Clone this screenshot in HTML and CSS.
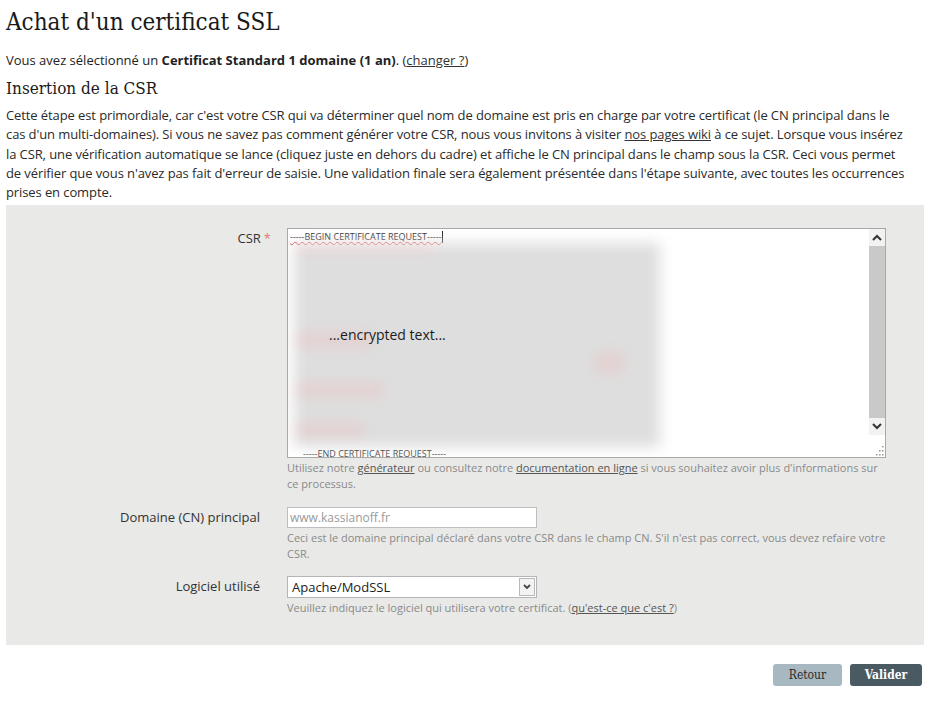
FILE: index.html
```html
<!DOCTYPE html>
<html lang="fr">
<head>
    <meta charset="UTF-8">
    <meta name="viewport" content="width=device-width, initial-scale=1.0">
    <title>Achat d'un certificat SSL</title>
    <link rel="stylesheet" href="styles.css">
</head>
<body>
    <main class="page">
        <h1 class="title">Achat d'un certificat SSL</h1>
        <p class="selection">
            Vous avez sélectionné un <strong>Certificat Standard 1 domaine (1 an)</strong>. (<a href="#">changer ?</a>)
        </p>
        <h2 class="subtitle">Insertion de la CSR</h2>
        <p class="intro">
            Cette étape est primordiale, car c'est votre CSR qui va déterminer quel nom de domaine est pris en charge par votre certificat (le CN principal dans le<br>
            cas d'un multi-domaines). Si vous ne savez pas comment générer votre CSR, nous vous invitons à visiter <a href="#">nos pages wiki</a> à ce sujet. Lorsque vous insérez<br>
            la CSR, une vérification automatique se lance (cliquez juste en dehors du cadre) et affiche le CN principal dans le champ sous la CSR. Ceci vous permet<br>
            de vérifier que vous n'avez pas fait d'erreur de saisie. Une validation finale sera également présentée dans l'étape suivante, avec toutes les occurrences<br>
            prises en compte.
        </p>

        <form class="panel">
            <div class="row">
                <label class="label">CSR<span class="req">*</span></label>
                <div class="field">
                    <div class="csr-box">
                        <div class="csr-text">
                            <div class="csr-line"><span class="spell">-----BEGIN CERTIFICATE REQUEST-----</span><span class="caret"></span></div>
                            <div class="csr-blur">
                                <div class="smudge smudge-a"></div>
                                <div class="smudge smudge-b"></div>
                                <div class="smudge smudge-c"></div>
                                <div class="smudge smudge-d"></div>
                                <div class="smudge smudge-e"></div>
                            </div>
                            <div class="csr-note">...encrypted text...</div>
                            <div class="csr-end">-----END CERTIFICATE REQUEST-----</div>
                        </div>
                        <div class="scrollbar">
                            <div class="sb-btn">
                                <svg width="10" height="7" viewBox="0 0 10 7"><path d="M1 6 L5 2 L9 6" fill="none" stroke="#333" stroke-width="2"/></svg>
                            </div>
                            <div class="sb-thumb"></div>
                            <div class="sb-btn">
                                <svg width="10" height="7" viewBox="0 0 10 7"><path d="M1 1 L5 5 L9 1" fill="none" stroke="#333" stroke-width="2"/></svg>
                            </div>
                            <div class="sb-grip">
                                <svg width="10" height="10" viewBox="0 0 10 10" fill="#999">
                                    <rect x="8" y="0" width="1.5" height="1.5"/>
                                    <rect x="5" y="4" width="1.5" height="1.5"/><rect x="8" y="4" width="1.5" height="1.5"/>
                                    <rect x="2" y="8" width="1.5" height="1.5"/><rect x="5" y="8" width="1.5" height="1.5"/><rect x="8" y="8" width="1.5" height="1.5"/>
                                </svg>
                            </div>
                        </div>
                    </div>
                    <p class="hint">Utilisez notre <a href="#">générateur</a> ou consultez notre <a href="#">documentation en ligne</a> si vous souhaitez avoir plus d'informations sur ce processus.</p>
                </div>
            </div>

            <div class="row">
                <label class="label" for="cn">Domaine (CN) principal</label>
                <div class="field">
                    <input type="text" id="cn" class="text-input" value="www.kassianoff.fr" readonly>
                    <p class="hint hint-tight">Ceci est le domaine principal déclaré dans votre CSR dans le champ CN. S'il n'est pas correct, vous devez refaire votre CSR.</p>
                </div>
            </div>

            <div class="row">
                <label class="label" for="soft">Logiciel utilisé</label>
                <div class="field">
                    <div class="select" id="soft">
                        <span class="select-value">Apache/ModSSL</span>
                        <span class="select-arrow">
                            <svg width="8" height="6" viewBox="0 0 8 6"><path d="M1 1 L4 4 L7 1" fill="none" stroke="#444" stroke-width="1.8"/></svg>
                        </span>
                    </div>
                    <p class="hint">Veuillez indiquez le logiciel qui utilisera votre certificat. (<a href="#">qu'est-ce que c'est ?</a>)</p>
                </div>
            </div>
        </form>

        <div class="actions">
            <button type="button" class="btn btn-back">Retour</button>
            <button type="button" class="btn btn-next">Valider</button>
        </div>
    </main>
</body>
</html>
```

FILE: styles.css
```css
body {
    margin: 0;
    padding: 0;
    background: #fff;
    color: #222;
    font-family: "Open Sans", Arial, sans-serif;
    font-size: 13px;
}
a {
    color: #333;
    text-decoration: underline;
}
.page {
    width: 918px;
    padding: 0 0 0 6px;
}
.title {
    font-family: "DejaVu Serif", "Liberation Serif", serif;
    font-stretch: condensed;
    font-weight: normal;
    font-size: 24px;
    line-height: 30px;
    margin: 7px 0 0;
    color: #1a1a1a;
}
.selection {
    margin: 13px 0 0;
    line-height: 20px;
    color: #222;
}
.subtitle {
    font-family: "DejaVu Serif", "Liberation Serif", serif;
    font-stretch: condensed;
    font-weight: normal;
    font-size: 17px;
    line-height: 20px;
    margin: 8px 0 0;
    color: #1a1a1a;
}
.intro {
    margin: 8px 0 0;
    font-size: 13px;
    line-height: 19.3px;
    letter-spacing: -0.1px;
    white-space: nowrap;
    color: #2a2a2a;
}

/* grey form block */
.panel {
    margin-top: 3px;
    background: #e9e9e7;
    padding: 23px 0 29px;
    display: flex;
    flex-direction: column;
    gap: 15px;
}
.row {
    display: grid;
    grid-template-columns: 254px 599px;
    column-gap: 27px;
}
.label {
    text-align: right;
    color: #333;
    font-size: 13px;
    line-height: 21px;
}
.req {
    color: #e07a70;
    margin-left: 3px;
    margin-right: -11px;
}
.field {
    display: flex;
    flex-direction: column;
}
.hint {
    margin: 2px 0 0;
    font-size: 11px;
    line-height: 16px;
    color: #8a8a8a;
}
.hint-tight {
    margin-right: -8px;
    line-height: 15.5px;
}
.hint a {
    color: #555;
}

/* CSR textarea */
.csr-box {
    height: 228px;
    border: 1px solid #a9a9a9;
    background: #fff;
    display: flex;
    overflow: hidden;
}
.csr-text {
    flex: 1;
    position: relative;
    overflow: hidden;
}
.csr-line {
    font-size: 9px;
    line-height: 12px;
    padding: 2px 0 0 2px;
    color: #333;
    display: flex;
    align-items: center;
}
.spell {
    text-decoration: underline wavy #d04040;
    text-decoration-thickness: 1px;
    text-underline-offset: 1px;
}
.caret {
    display: inline-block;
    width: 1px;
    height: 12px;
    background: #222;
    margin-left: 1px;
}
/* last line, scrolled half out of view */
.csr-end {
    position: absolute;
    left: 15px;
    bottom: 0;
    height: 7px;
    overflow: hidden;
    font-size: 9px;
    line-height: 7px;
    color: #555;
    white-space: nowrap;
}
.csr-blur {
    position: absolute;
    left: 6px;
    top: 14px;
    width: 366px;
    height: 204px;
    background: #dedede;
    filter: blur(7px);
}
.smudge {
    position: absolute;
    background: #e4d0d0;
    border-radius: 4px;
}
.smudge-a { left: 0; top: 90px; width: 80px; height: 14px; }
.smudge-b { left: 0; top: 140px; width: 90px; height: 14px; }
.smudge-c { left: 0; top: 180px; width: 70px; height: 14px; }
.smudge-d { left: 300px; top: 110px; width: 30px; height: 20px; }
.smudge-e { left: 0; top: 0; width: 140px; height: 10px; background: #e6d6d6; }
.csr-note {
    position: absolute;
    left: 41px;
    top: 96px;
    font-size: 14px;
    color: #1c1c1c;
}
.scrollbar {
    width: 16px;
    display: flex;
    flex-direction: column;
    background: #f0f0f0;
}
.sb-btn {
    height: 17px;
    display: flex;
    align-items: center;
    justify-content: center;
    background: #f2f2f2;
}
.sb-thumb {
    height: 172px;
    background: #c9c9c9;
}
.sb-grip {
    flex: 1;
    background: #fff;
    display: flex;
    align-items: flex-end;
    justify-content: flex-end;
    padding: 0 1px 1px 0;
}

/* inputs */
.text-input {
    box-sizing: border-box;
    width: 250px;
    height: 21px;
    margin: 0;
    border: 1px solid #bdbdbd;
    padding: 0 2px;
    font-family: "Open Sans", Arial, sans-serif;
    font-size: 12px;
    color: #9a9a9a;
    background: #fff;
    outline: none;
}
.select {
    box-sizing: border-box;
    width: 250px;
    height: 22px;
    border: 1px solid #b5b5b5;
    background: #fff;
    display: flex;
    align-items: center;
    justify-content: space-between;
}
.select-value {
    padding-left: 4px;
    font-size: 13px;
    color: #222;
}
.select-arrow {
    box-sizing: border-box;
    width: 16px;
    height: 18px;
    margin-right: 1px;
    border: 1px solid #b8b8b8;
    background: #f3f3f3;
    display: flex;
    align-items: center;
    justify-content: center;
}

/* bottom buttons */
.actions {
    display: flex;
    justify-content: flex-end;
    gap: 8px;
    margin-top: 19px;
    padding-right: 2px;
}
.btn {
    height: 22px;
    border: none;
    border-radius: 3px;
    font-family: "DejaVu Serif", "Liberation Serif", serif;
    font-stretch: condensed;
    font-size: 12px;
    cursor: pointer;
}
.btn-back {
    width: 69px;
    background: #a8b8c0;
    color: #2a2a2a;
}
.btn-next {
    width: 72px;
    background: #4a5a63;
    color: #fff;
    font-weight: bold;
}
```
